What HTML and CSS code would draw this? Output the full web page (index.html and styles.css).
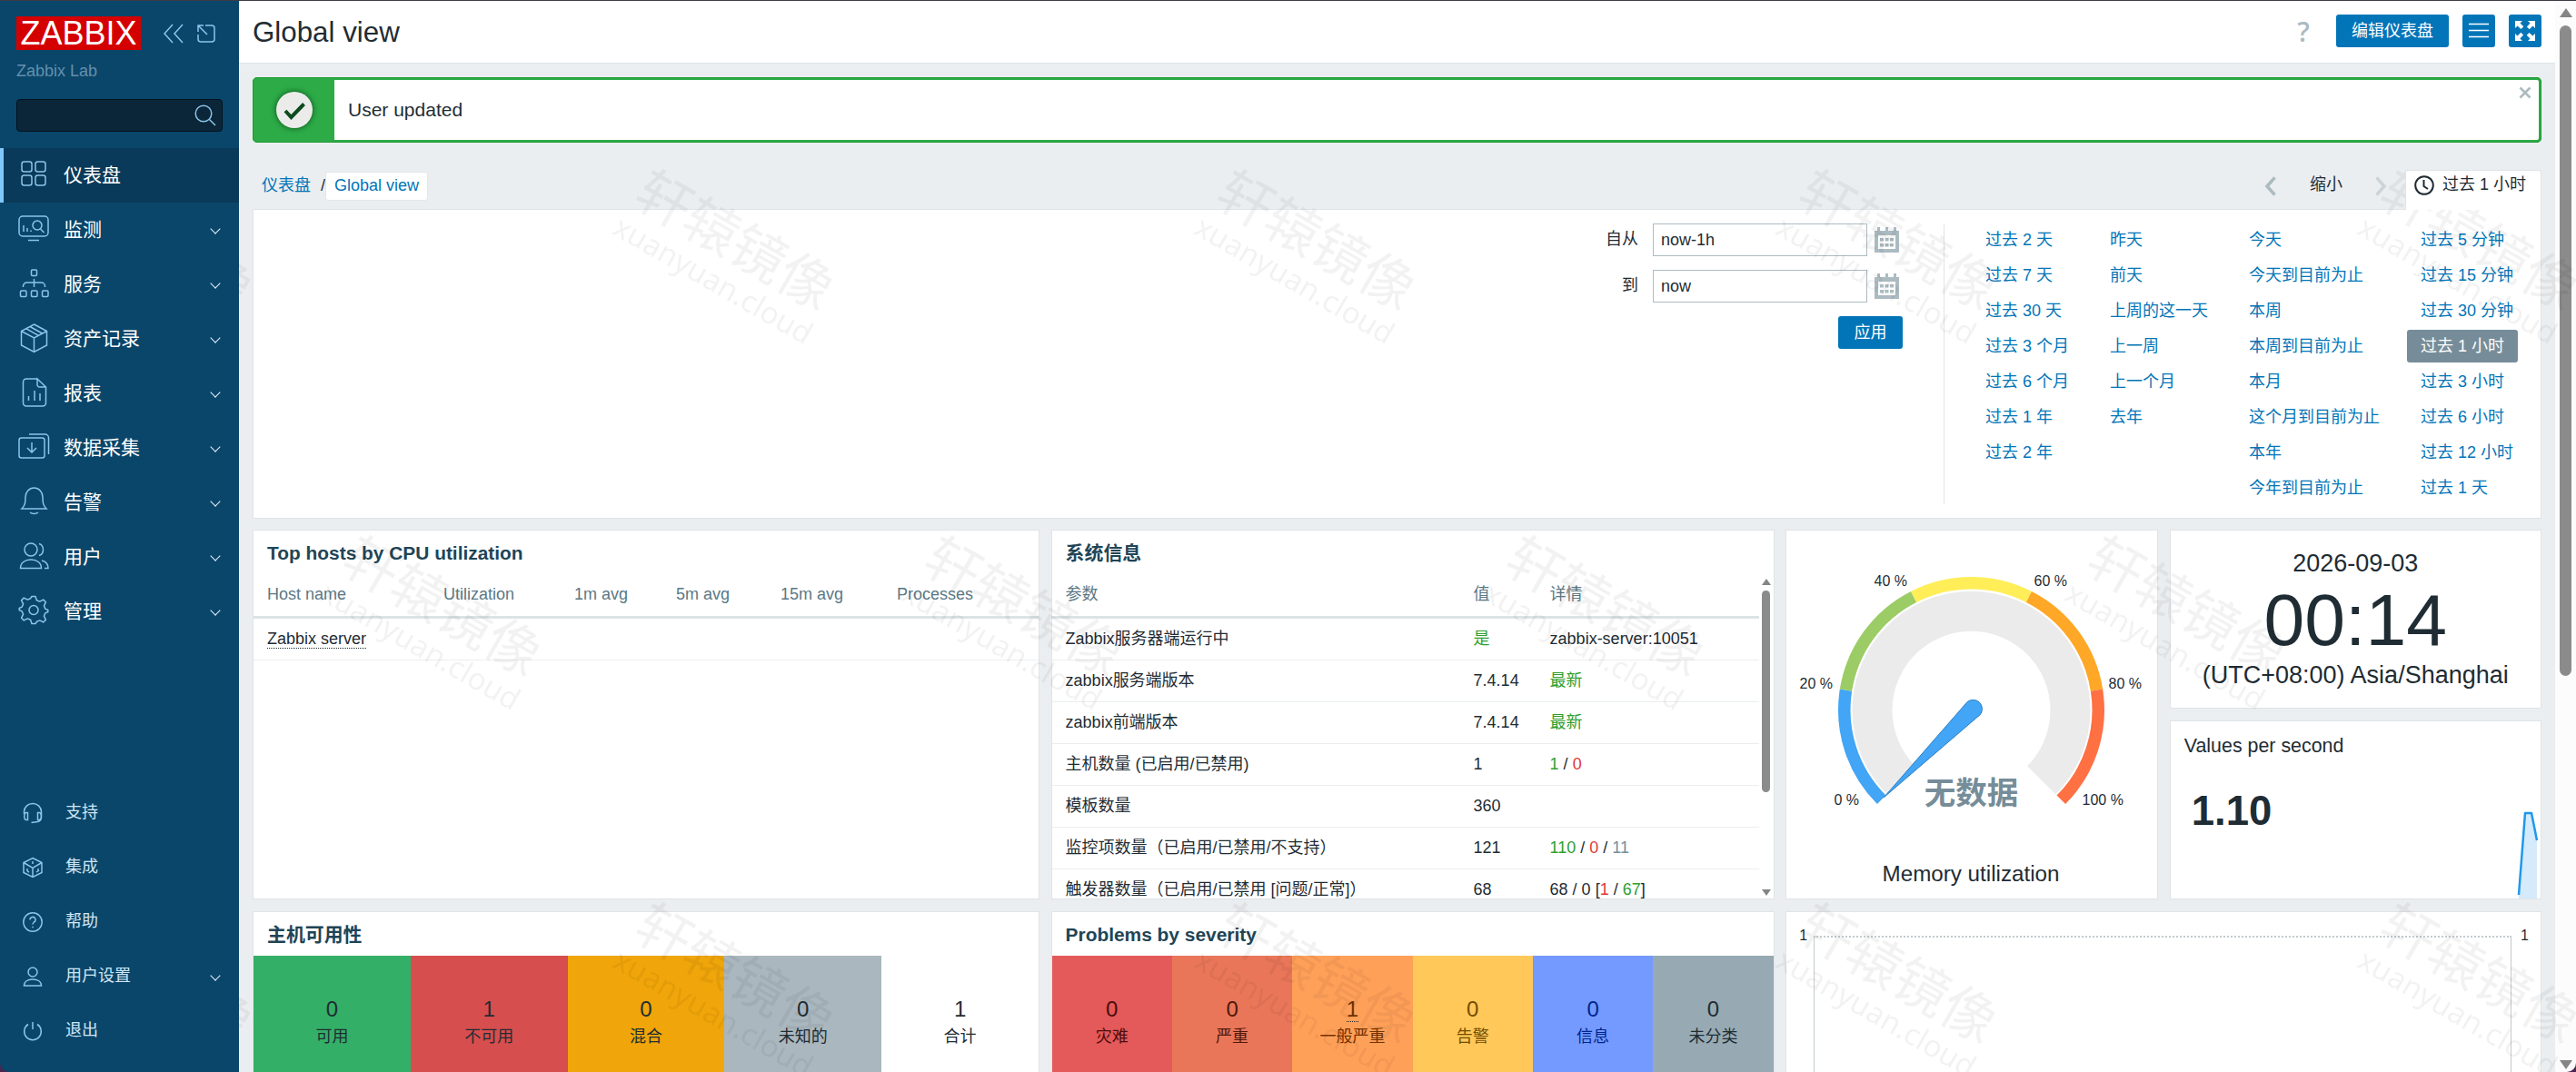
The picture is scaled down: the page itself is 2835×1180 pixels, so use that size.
FILE: index.html
```html
<!DOCTYPE html>
<html lang="zh-CN">
<head>
  <meta charset="UTF-8" />
  <meta name="viewport" content="width=device-width, initial-scale=1.0"/>
  <title>Zabbix Lab: Dashboard</title>
  <link rel="stylesheet" href="styles.css">
</head>
<body>

  <aside class="sidebar">
    <div class="sidebar-header">
      <div class="logo">ZABBIX</div>
      <svg class="icon collapse" width="22" height="22" viewBox="0 0 22 22"><path d="M10 1L1 11l9 10M21 1l-9 10 9 10"/></svg>
      <svg class="icon popout" width="20" height="20" viewBox="0 0 20 20"><path d="M9 1h7a3 3 0 0 1 3 3v12a3 3 0 0 1-3 3H4a3 3 0 0 1-3-3v-5M1 8V1h6M1 1l10 10"/></svg>
    </div>
    <div class="server-name">Zabbix Lab</div>
    <div class="search">
      <svg class="icon" width="24" height="24" viewBox="0 0 24 24"><circle cx="10" cy="10" r="8.8"/><path d="M16.500 16.500L23 23"/></svg>
    </div>

    <nav class="menu-main">
      <a class="menu-item active"><svg class="icon" width="36" height="36" viewBox="0 0 36 36"><rect x="5" y="5" width="11" height="11" rx="2.500"/><rect x="20" y="5" width="11" height="11" rx="2.500"/><rect x="5" y="20" width="11" height="11" rx="2.500"/><rect x="20" y="20" width="11" height="11" rx="2.500"/></svg>仪表盘</a>
      <a class="menu-item has-sub"><svg class="icon" width="36" height="36" viewBox="0 0 36 36"><rect x="2" y="5" width="32" height="22" rx="4"/><path d="M12 31.500h12M7 22v-7M11 22v-4M15 22v-1.500M25.500 19l4 4"/><circle cx="22" cy="15" r="5"/></svg>监测</a>
      <a class="menu-item has-sub"><svg class="icon" width="36" height="36" viewBox="0 0 36 36"><rect x="15.500" y="4" width="6" height="6.500" rx="1.200"/><rect x="3.500" y="27" width="6.500" height="6.500" rx="1.200"/><rect x="15.500" y="27" width="6.500" height="6.500" rx="1.200"/><rect x="27.500" y="27" width="6.500" height="6.500" rx="1.200"/><path d="M18.500 14v9M6.500 23v-1a4 4 0 0 1 4-4h16a4 4 0 0 1 4 4v1"/></svg>服务</a>
      <a class="menu-item has-sub"><svg class="icon" width="36" height="36" viewBox="0 0 36 36"><path d="M18.500 4L32.500 11.500v15.500l-14 7.500-14-7.500V11.500zM4.500 11.500l14 7.500 14-7.500M18.500 19v15.500M10 8.800l13.500 7.500M14 6.500l13.500 7.500"/></svg>资产记录</a>
      <a class="menu-item has-sub"><svg class="icon" width="36" height="36" viewBox="0 0 36 36"><path d="M22 4H10a3.500 3.500 0 0 0-3.500 3.500v23A3.500 3.500 0 0 0 10 34h18a3.500 3.500 0 0 0 3.500-3.500V13L22 4v6.500a2.500 2.500 0 0 0 2.500 2.500h7M12.500 28v-5M19 28V17M25 28v-8"/></svg>报表</a>
      <a class="menu-item has-sub"><svg class="icon" width="36" height="36" viewBox="0 0 36 36"><rect x="2" y="9" width="28" height="22" rx="2.500"/><path d="M13 5h17.500a4 4 0 0 1 4 4v18M16 14v11M11 20l5 5 5-5"/></svg>数据采集</a>
      <a class="menu-item has-sub"><svg class="icon" width="36" height="36" viewBox="0 0 36 36"><path d="M5 27c4-4 4-8 4-13a9.500 10 0 0 1 19 0c0 5 0 9 4 13zM14 31c2.500 2 6.500 2 9 0"/></svg>告警</a>
      <a class="menu-item has-sub"><svg class="icon" width="36" height="36" viewBox="0 0 36 36"><circle cx="15" cy="12" r="7"/><path d="M3.500 32.500c0-6 5-9.500 11.500-9.500S26.500 26.500 26.500 32.500zM24 5.500c6 2 6 11 0 13M27 24c4 1 7 4 7 8.500h-4"/></svg>用户</a>
      <a class="menu-item has-sub"><svg class="icon" width="36" height="36" viewBox="0 0 36 36"><circle cx="18" cy="18.500" r="5"/><path d="M16 3.500h4l1.400 4.200 3.300 1.400 4-2 2.700 2.700-2 4 1.400 3.300 3 1.400v2l-3 1.400-1.400 3.300 2 4-2.700 2.700-4-2-3.300 1.400L20 33.500h-4l-1.400-4.200-3.300-1.400-4 2-2.700-2.700 2-4-1.400-3.300-3-1.400v-2l3-1.400 1.400-3.300-2-4 2.700-2.700 4 2 3.300-1.400z" stroke-linejoin="round"/></svg>管理</a>
    </nav>

    <nav class="menu-user">
      <a class="menu-item"><svg class="icon" width="24" height="24" viewBox="0 0 24 24"><path d="M2.500 13V10.500a9.500 9 0 0 1 19 0V17c0 3-2 4-4 4.500l-7 1M5 11.500c-3 0-3 8 0 8h1.500v-8zM19 11.500c3 0 3 8 0 8h-1.500v-8z"/></svg>支持</a>
      <a class="menu-item"><svg class="icon" width="24" height="24" viewBox="0 0 24 24"><path d="M12 1.500l10 5v11l-10 5-10-5v-11zM2 6.500l10 6 10-6M12 12.500v10M12 5v3M6 13v3M18 13v3M8 17l-2-1M16 17l3-2"/></svg>集成</a>
      <a class="menu-item"><svg class="icon" width="24" height="24" viewBox="0 0 24 24"><circle cx="12" cy="12" r="10.200"/><path d="M9 9.500a3 3 0 1 1 4.500 2.500c-1 .7-1.500 1.200-1.500 2.500M12 16.700v1.600"/></svg>帮助</a>
      <a class="menu-item has-sub"><svg class="icon" width="24" height="24" viewBox="0 0 24 24"><circle cx="12" cy="7" r="5"/><path d="M2.500 22c0-4.500 4-7 9.500-7s9.500 2.500 9.500 7z"/></svg>用户设置</a>
      <a class="menu-item"><svg class="icon" width="24" height="24" viewBox="0 0 24 24"><path d="M12 2v8M7 4.500a9.300 9.300 0 1 0 10 0"/></svg>退出</a>
    </nav>
  </aside>

  <div class="wrapper">
    <main>
      <header class="page-header">
        <h1>Global view</h1>
        <span class="help">?</span>
        <button class="btn">编辑仪表盘</button>
        <button class="btn btn-icon"><svg width="24" height="24" viewBox="0 0 24 24"><path d="M1 4.500h22M1 11.500h22M1 18.500h22" stroke="#fff" stroke-width="1.600"/></svg></button>
        <button class="btn btn-icon"><svg width="24" height="24" viewBox="0 0 24 24" fill="#fff"><path id="arr" d="M1 1h8L6.500 3.500l3.800 3.800-2.800 2.800-3.900-3.700L1 9z"/><use href="#arr" transform="rotate(90 12 12)"/><use href="#arr" transform="rotate(180 12 12)"/><use href="#arr" transform="rotate(270 12 12)"/></svg></button>
      </header>

      <div class="msg-good">
        <div class="msg-icon"><svg width="60" height="60" viewBox="0 0 60 60"><circle class="disc" cx="30" cy="30" r="20"/><path d="M20 31l6.500 7L40.500 23.500" fill="none" stroke="#0d4a1c" stroke-width="4"/></svg></div>
        <span>User updated</span>
        <svg class="msg-close" width="14" height="14" viewBox="0 0 14 14"><path d="M1.500 1.500l11 11M12.500 1.500l-11 11" stroke="#acbbc2" stroke-width="2.600"/></svg>
      </div>

      <div class="nav-row">
        <div class="breadcrumbs"><a>仪表盘</a><i>/</i><a class="current">Global view</a></div>
        <div class="time-nav">
          <svg width="14" height="22" viewBox="0 0 14 22"><path d="M11.500 1.500L3 11l8.500 9.500" fill="none" stroke="#acbbc2" stroke-width="3.500"/></svg>
          <span class="zoom-out">缩小</span>
          <svg width="14" height="22" viewBox="0 0 14 22"><path d="M2.500 1.500L11 11l-8.500 9.500" fill="none" stroke="#cbd4d8" stroke-width="3.500"/></svg>
          <div class="time-tab"><svg width="22" height="22" viewBox="0 0 22 22" fill="none" stroke="#1f2c33" stroke-width="2"><circle cx="11" cy="11" r="9.800"/><path d="M10.500 5v7l4.500 3"/></svg>过去 1 小时</div>
        </div>
      </div>

      <section class="time-filter">
        <div class="time-form">
          <label>自从</label><div class="field">now-1h</div><svg class="cal" width="27" height="28" viewBox="0 0 27 28"><use href="#calendar"/></svg>
          <label>到</label><div class="field">now</div><svg class="cal" width="27" height="28" viewBox="0 0 27 28"><g id="calendar" fill="#acbbc2"><path d="M0 4h27v24H0zM4 9v15h19V9z" fill-rule="evenodd"/><path d="M3 0h3v5H3zM12 0h3v5h-3zM21 0h3v5h-3zM6 12h4v3.500H6zM11.500 12h4v3.500h-4zM17 12h4v3.500h-4zM6 18h4v3.500H6zM11.500 18h4v3.500h-4zM17 18h4v3.500h-4z"/></g></svg>
          <button class="btn apply">应用</button>
        </div>
        <div class="quick">
          <ul><li>过去 2 天</li><li>过去 7 天</li><li>过去 30 天</li><li>过去 3 个月</li><li>过去 6 个月</li><li>过去 1 年</li><li>过去 2 年</li></ul>
          <ul><li>昨天</li><li>前天</li><li>上周的这一天</li><li>上一周</li><li>上一个月</li><li>去年</li></ul>
          <ul><li>今天</li><li>今天到目前为止</li><li>本周</li><li>本周到目前为止</li><li>本月</li><li>这个月到目前为止</li><li>本年</li><li>今年到目前为止</li></ul>
          <ul><li>过去 5 分钟</li><li>过去 15 分钟</li><li>过去 30 分钟</li><li class="selected">过去 1 小时</li><li>过去 3 小时</li><li>过去 6 小时</li><li>过去 12 小时</li><li>过去 1 天</li></ul>
        </div>
      </section>

      <div class="dashboard">
        <section class="widget tall">
          <h4>Top hosts by CPU utilization</h4>
          <div class="row head hosts"><span>Host name</span><span>Utilization</span><span>1m avg</span><span>5m avg</span><span>15m avg</span><span>Processes</span></div>
          <div class="row hosts"><span><a class="dotted">Zabbix server</a></span></div>
        </section>

        <section class="widget tall">
          <h4>系统信息</h4>
          <div class="scrollable">
            <div class="table">
              <div class="row head info"><span>参数</span><span>值</span><span>详情</span></div>
              <div class="row info"><span>Zabbix服务器端运行中</span><span class="green">是</span><span>zabbix-server:10051</span></div>
              <div class="row info"><span>zabbix服务端版本</span><span>7.4.14</span><span class="green">最新</span></div>
              <div class="row info"><span>zabbix前端版本</span><span>7.4.14</span><span class="green">最新</span></div>
              <div class="row info"><span>主机数量 (已启用/已禁用)</span><span>1</span><span><b class="green">1</b> / <b class="red">0</b></span></div>
              <div class="row info"><span>模板数量</span><span>360</span><span></span></div>
              <div class="row info"><span>监控项数量（已启用/已禁用/不支持）</span><span>121</span><span><b class="green">110</b> / <b class="red">0</b> / <b class="grey">11</b></span></div>
              <div class="row info"><span>触发器数量（已启用/已禁用 [问题/正常]）</span><span>68</span><span>68 / 0 [<b class="red">1</b> / <b class="green">67</b>]</span></div>
            </div>
            <div class="scrollbar small"><i class="up"></i><i class="thumb"></i><i class="down"></i></div>
          </div>
        </section>

        <section class="widget tall">
          <svg class="gauge" width="407" height="405" viewBox="1966 584 407 405">
            <g fill="none">
              <path d="M2092.300 858.700A109 109 0 1 1 2246.700 858.700" stroke="#ebebeb" stroke-width="44"/>
              <g stroke-width="13.500">
                <path d="M2070.700 880.300A139.700 139.700 0 0 1 2031.500 759.600" stroke="#42a5f5"/>
                <path d="M2031.500 759.600A139.700 139.700 0 0 1 2106.100 657" stroke="#9ccc65"/>
                <path d="M2106.100 657A139.700 139.700 0 0 1 2232.900 657" stroke="#ffee58"/>
                <path d="M2232.900 657A139.700 139.700 0 0 1 2307.500 759.600" stroke="#ffa726"/>
                <path d="M2307.500 759.600A139.700 139.700 0 0 1 2268.300 880.300" stroke="#ff7043"/>
              </g>
            </g>
            <path d="M2073 878L2163 775A10 10 0 1 1 2176.500 789Z" fill="#42a5f5" stroke="#2d7fc4"/>
            <g class="gauge-scale">
              <text x="2018.500" y="886">0 %</text>
              <text x="1980.500" y="758">20 %</text>
              <text x="2062.500" y="645">40 %</text>
              <text x="2238.500" y="645">60 %</text>
              <text x="2320.500" y="758">80 %</text>
              <text x="2291.500" y="886">100 %</text>
            </g>
            <text class="gauge-value" x="2169.500" y="885">无数据</text>
            <text class="gauge-name" x="2169" y="970">Memory utilization</text>
          </svg>
        </section>

        <section class="widget clock">
          <div class="date">2026-09-03</div>
          <div class="time">00:14</div>
          <div class="zone">(UTC+08:00) Asia/Shanghai</div>
        </section>

        <section class="widget item-value">
          <div class="item-name">Values per second</div>
          <div class="item-number">1.10</div>
          <svg class="sparkline" width="26" height="98" viewBox="0 0 26 98"><path d="M3 94L10 4h7l6 30v64H3z" fill="#d5eafa"/><path d="M3 94L10 4h7l6 30" fill="none" stroke="#1f98ec" stroke-width="2.500" stroke-linejoin="round"/></svg>
        </section>

        <section class="widget">
          <h4>主机可用性</h4>
          <div class="totals">
            <div class="available"><strong>0</strong>可用</div>
            <div class="unavailable"><strong>1</strong>不可用</div>
            <div class="mixed"><strong>0</strong>混合</div>
            <div class="unknown"><strong>0</strong>未知的</div>
            <div><strong>1</strong>合计</div>
          </div>
        </section>

        <section class="widget">
          <h4>Problems by severity</h4>
          <div class="totals">
            <div class="disaster"><strong>0</strong>灾难</div>
            <div class="high"><strong>0</strong>严重</div>
            <div class="average"><strong><a class="dotted">1</a></strong>一般严重</div>
            <div class="warning"><strong>0</strong>告警</div>
            <div class="info-sev"><strong>0</strong>信息</div>
            <div class="na"><strong>0</strong>未分类</div>
          </div>
        </section>

        <section class="widget graph">
          <span>1</span><div class="plot"></div><span>1</span>
        </section>
      </div>
    </main>
    <div class="scrollbar"><i class="up"></i><i class="thumb"></i><i class="down"></i></div>

    <svg class="watermark" width="2572" height="1180" viewBox="263 0 2572 1180">
      <defs>
        <g id="mark" transform="rotate(30)">
          <text class="mark-cn" x="2" y="21">轩辕镜像</text>
          <text class="mark-en" x="3" y="61">xuanyuan.cloud</text>
        </g>
      </defs>
      <use href="#mark" x="167" y="264"/><use href="#mark" x="807" y="264"/><use href="#mark" x="1447" y="264"/><use href="#mark" x="2087" y="264"/><use href="#mark" x="2727" y="264"/>
      <use href="#mark" x="485" y="667"/><use href="#mark" x="1125" y="667"/><use href="#mark" x="1765" y="667"/><use href="#mark" x="2405" y="667"/>
      <use href="#mark" x="167" y="1071"/><use href="#mark" x="807" y="1071"/><use href="#mark" x="1447" y="1071"/><use href="#mark" x="2087" y="1071"/><use href="#mark" x="2727" y="1071"/>
    </svg>
  </div>

</body>
</html>
```
FILE: styles.css
```css
* {
  box-sizing: border-box;
  margin: 0;
  padding: 0;
}

body {
  display: flex;
  height: 1180px;
  overflow: hidden;
  border-top: 1px solid #3c3c44;
  background-color: #4b2450;
  color: #1f2c33;
  font-family: "Liberation Sans", "Noto Sans CJK SC", sans-serif;
  font-size: 18px;
  line-height: 1.2;
}

ul {
  list-style: none;
}

b,
strong,
i {
  font-weight: normal;
  font-style: normal;
}

/* sidebar */

.sidebar {
  display: flex;
  flex-direction: column;
  flex: 0 0 263px;
  padding-bottom: 15px;
  background-color: #0a466a;
  border-bottom-left-radius: 10px;
}

.icon {
  fill: none;
  stroke: #8cc4ea;
  stroke-width: 1.5;
}

.sidebar-header {
  display: flex;
  align-items: center;
  height: 37px;
  margin: 17px 0 0 18px;
}

.logo {
  width: 137px;
  height: 37px;
  background-color: #d40000;
  color: white;
  font-size: 36px;
  line-height: 38px;
  text-align: center;
}

.collapse {
  margin-left: 25px;
}

.popout {
  margin-left: 15px;
}

.server-name {
  margin: 12px 0 0 18px;
  color: #6390ad;
  line-height: 22px;
}

.search {
  display: flex;
  align-items: center;
  justify-content: flex-end;
  width: 227px;
  height: 36px;
  margin: 20px 0 18px 18px;
  padding-right: 6px;
  background-color: #0a2638;
  border: 1px solid #04131d;
  border-radius: 4px;
}

.menu-item {
  display: flex;
  align-items: center;
  height: 60px;
  padding-left: 19px;
  color: white;
  font-size: 21px;
}

.menu-main .icon {
  margin: -4px 15px 0 0;
}

.menu-item.active {
  padding-left: 15px;
  border-left: 4px solid #7fc8fb;
  background-color: #0a3a59;
}

.has-sub::after {
  content: "";
  box-sizing: border-box;
  width: 8px;
  height: 8px;
  margin: -3px 22px 0 auto;
  border: solid #e4f1fa;
  border-width: 0 1.5px 1.5px 0;
  transform: rotate(45deg);
}

.menu-user {
  margin-top: auto;
}

.menu-user .menu-item {
  padding-left: 24px;
  color: #d0e6f5;
  font-size: 18px;
}

.menu-user .icon {
  margin-right: 24px;
}

/* page */

.wrapper {
  position: relative;
  display: flex;
  flex: 1;
  overflow: hidden;
  background-color: #fcfcfc;
  border-bottom-right-radius: 10px;
}

main {
  width: 2549px;
  background-color: #ebeef0;
}

.page-header {
  display: flex;
  align-items: center;
  height: 69px;
  padding: 0 15px;
  background-color: white;
  border-bottom: 1px solid #dfe4e7;
}

h1 {
  margin: 2px auto 0 0;
  font-size: 31.3px;
  font-weight: normal;
}

.help {
  margin: 0 29px 0 0;
  color: #acbbc2;
  font-family: "Open Sans", sans-serif;
  font-size: 30px;
  font-weight: 600;
}

.btn {
  height: 36px;
  margin-bottom: 2px;
  padding: 1px 17px 0;
  background-color: #0275b8;
  border: 0;
  border-radius: 3px;
  color: white;
  font: inherit;
}

.btn-icon {
  display: flex;
  align-items: center;
  justify-content: center;
  width: 36px;
  margin-left: 15px;
  padding: 0;
}

.msg-good {
  position: relative;
  display: flex;
  align-items: center;
  height: 72px;
  margin: 15px 15px 0;
  background-color: white;
  border: 3px solid #2cab47;
  border-radius: 5px;
  outline: 1px solid #1c9a2f;
  outline-offset: -1px;
  font-size: 21px;
}

.msg-icon {
  display: flex;
  align-items: center;
  justify-content: center;
  align-self: stretch;
  width: 87px;
  padding-right: 2px;
  margin-right: 15px;
  background-color: #2cab47;
}

.disc {
  fill: #ebecea;
  filter: drop-shadow(0 0 3px #0c4a18);
}

.msg-close {
  position: absolute;
  top: 7px;
  right: 8px;
}

.nav-row {
  display: flex;
  justify-content: space-between;
  height: 73px;
  padding: 30px 15px 0;
}

.breadcrumbs {
  display: flex;
  align-items: center;
  height: 35px;
  padding-left: 10px;
  color: #0275b8;
}

.breadcrumbs i {
  margin-left: 11px;
  color: #1f2c33;
}

.breadcrumbs .current {
  height: 32px;
  padding: 0 9px;
  background-color: white;
  border: 1px solid #e3e7e9;
  border-radius: 3px;
  line-height: 29px;
}

.time-nav {
  display: flex;
  align-items: center;
}

.time-nav > svg {
  margin-bottom: 8px;
}

.zoom-out {
  margin: 0 35px 9px 36px;
}

.time-tab {
  display: flex;
  align-items: center;
  gap: 9px;
  height: 44px;
  width: 150px;
  margin: 0 0 -1px 20px;
  padding: 0 0 12px 9px;
  background-color: white;
  border: 1px solid #dfe4e7;
  border-bottom: 0;
  border-radius: 3px 3px 0 0;
  z-index: 1;
}

.time-filter {
  display: flex;
  justify-content: flex-end;
  height: 341px;
  margin: 0 15px;
  padding: 15px 25px 15px 0;
  background-color: white;
  border: 1px solid #dfe4e7;
}

.time-form {
  display: grid;
  grid-template-columns: auto 236px 39px;
  grid-auto-rows: 36px;
  align-items: center;
  gap: 15px 0;
  padding-right: 45px;
}

.time-form label {
  margin-right: 16px;
  text-align: right;
}

.field {
  height: 36px;
  padding-left: 8px;
  border: 1px solid #acbbc2;
  line-height: 34px;
}

.cal {
  margin-left: 8px;
}

.apply {
  grid-column: 2 / 4;
  justify-self: end;
  width: 71px;
  margin: 0;
}

.quick {
  display: grid;
  grid-template-columns: 137px 153px 189px 122px;
  padding-left: 30px;
  border-left: 1px solid #dfe4e7;
}

.quick li {
  height: 36px;
  margin-bottom: 3px;
  padding-left: 15px;
  border-radius: 3px;
  color: #0275b8;
  line-height: 37px;
  white-space: nowrap;
}

.quick .selected {
  background-color: #768d99;
  color: white;
}

/* dashboard */

.dashboard {
  display: grid;
  grid-template-columns: 866px 796px 410px 409px;
  grid-template-rows: 197px 197px 260px;
  gap: 13px 12.6px;
  margin: 12px 15px 0;
}

.widget {
  overflow: hidden;
  background-color: white;
  border: 1px solid #dfe4e7;
}

.tall {
  grid-row: span 2;
}

h4 {
  height: 48px;
  padding-left: 15px;
  color: #1f4556;
  font-size: 20.9px;
  line-height: 50px;
}

.row {
  display: grid;
  align-items: center;
  height: 46px;
  padding-left: 15px;
  border-bottom: 1px solid #ebeef0;
  white-space: nowrap;
}

.head {
  height: 49px;
  padding-bottom: 1px;
  border-bottom: 3px solid #dce3e4;
  color: #5b7885;
}

.hosts {
  grid-template-columns: 194px 144px 112px 115px 128px 1fr;
}

.info {
  grid-template-columns: 449px 84px 1fr;
}

.dotted {
  border-bottom: 1px dotted #1f2c33;
}

.green {
  color: #2f9f2f;
}

.red {
  color: #e33734;
}

.grey {
  color: #768d99;
}

.scrollable {
  display: flex;
}

.table {
  flex: 1;
}

.scrollbar {
  display: flex;
  flex-direction: column;
  align-items: center;
  width: 23px;
  padding: 8px 0 3px;
}

.scrollbar i {
  flex: none;
}

.up,
.down {
  border: solid transparent;
  border-width: 0 7px 10px;
  border-bottom-color: #858585;
}

.down {
  margin-top: auto;
  transform: rotate(180deg);
}

.thumb {
  width: 13px;
  height: 716px;
  margin-top: 9px;
  background-color: #8b8b8b;
  border-radius: 7px;
}

.small {
  width: 16px;
  height: 357px;
  padding: 5px 0 3px;
}

.small .up,
.small .down {
  border-width: 0 5px 7px;
}

.small .thumb {
  width: 9px;
  height: 222px;
  margin-top: 6px;
}

.gauge {
  display: block;
  fill: #1f2c33;
}

.gauge-scale {
  font-size: 16px;
}

.gauge-value {
  fill: #768d99;
  font-size: 34.5px;
  font-weight: bold;
  text-anchor: middle;
}

.gauge-name {
  font-size: 24.2px;
  text-anchor: middle;
}

.clock {
  padding-top: 20px;
  text-align: center;
}

.date,
.zone {
  font-size: 27px;
  line-height: 32px;
}

.time {
  height: 91px;
  font-size: 80.5px;
  line-height: 92px;
}

.item-value {
  position: relative;
  padding: 14px 15px 0;
}

.item-name {
  font-size: 21.4px;
  line-height: 27px;
}

.item-number {
  margin: 31px 0 0 8px;
  font-size: 45.5px;
  font-weight: bold;
  line-height: 54px;
}

.sparkline {
  position: absolute;
  right: 1px;
  bottom: 0;
}

.totals {
  display: grid;
  grid-auto-flow: column;
  grid-auto-columns: 1fr;
  height: 210px;
}

.totals div {
  padding-top: 44px;
  line-height: 32px;
  text-align: center;
}

.totals strong {
  display: block;
  height: 29px;
  font-size: 24px;
  line-height: 29px;
}

.available {
  background-color: #34af67;
}

.unavailable {
  background-color: #d64e4e;
}

.mixed {
  background-color: #f0a50a;
}

.unknown {
  background-color: #aab7be;
}

.disaster {
  background-color: #e45959;
  color: #4b0c0c;
}

.high {
  background-color: #e97659;
  color: #52170a;
}

.average {
  background-color: #ffa059;
  color: #733100;
}

.warning {
  background-color: #ffc859;
  color: #734c00;
}

.info-sev {
  background-color: #7499ff;
  color: #00268e;
}

.na {
  background-color: #97aab3;
}

.graph {
  display: flex;
  grid-column: span 2;
  padding: 16px 13px 0 14px;
  font-size: 16px;
}

.plot {
  flex: 1;
  margin: 10px 10px 0 7px;
  border: solid #c3cacd;
  border-width: 2px 1px 0;
  border-top-style: dotted;
}

/* watermark lies over everything but the sidebar */

.watermark {
  position: absolute;
  top: -1px;
  left: 0;
  fill: #000;
  opacity: 0.048;
  text-anchor: middle;
  pointer-events: none;
}

.mark-cn {
  font-family: "Noto Sans CJK SC", sans-serif;
  font-size: 60px;
}

.mark-en {
  font-family: "Noto Sans", sans-serif;
  font-size: 33px;
}
```
